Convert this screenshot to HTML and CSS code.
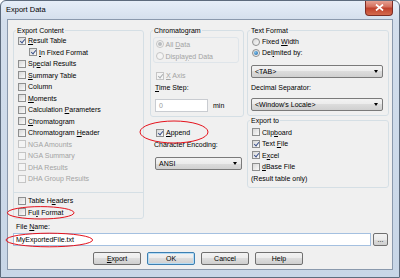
FILE: index.html
```html
<!DOCTYPE html>
<html lang="en">

<head>
    <meta charset="UTF-8">
    <meta name="viewport" content="width=device-width, initial-scale=1.0">
    <title>Export Data</title>
    <link rel="stylesheet" href="styles.css">
</head>

<body>
    <div class="window">
        <div class="titlebar">
            <span class="title">Export Data</span>
            <button class="close">
                <svg width="9" height="7" viewBox="0 0 9 7">
                    <path d="M1 0.5 L8 6.5 M8 0.5 L1 6.5" stroke="#fff" stroke-width="1.7" />
                </svg>
            </button>
        </div>

        <div class="client">
            <div class="panes">
                <!-- Export content -->
                <div class="col-left">
                    <fieldset class="group">
                        <legend>Export Content</legend>
                        <div class="content-body">
                            <div class="row"><span class="check on"></span><span><u>R</u>esult Table</span></div>
                            <div class="row indent"><span class="check on"></span><span><u>I</u>n Fixed Format</span></div>
                            <div class="row"><span class="check"></span><span>Sp<u>e</u>cial Results</span></div>
                            <div class="row"><span class="check"></span><span><u>S</u>ummary Table</span></div>
                            <div class="row"><span class="check"></span><span>Column</span></div>
                            <div class="row"><span class="check"></span><span><u>M</u>oments</span></div>
                            <div class="row"><span class="check"></span><span>Calculation <u>P</u>arameters</span></div>
                            <div class="row"><span class="check"></span><span><u>C</u>hromatogram</span></div>
                            <div class="row"><span class="check"></span><span>Chromatogram <u>H</u>eader</span></div>
                            <div class="row dis"><span class="check"></span><span>NGA Amounts</span></div>
                            <div class="row dis"><span class="check"></span><span>NGA Summary</span></div>
                            <div class="row dis"><span class="check"></span><span>DHA Results</span></div>
                            <div class="row dis"><span class="check"></span><span>DHA Group Results</span></div>
                            <div class="sep"></div>
                            <div class="row"><span class="check"></span><span>Table H<u>e</u>aders</span></div>
                            <div class="row"><span class="check"></span><span>Fu<u>l</u>l Format</span></div>
                        </div>
                    </fieldset>
                </div>

                <!-- Chromatogram -->
                <div class="col-mid">
                    <fieldset class="group">
                        <legend>Chromatogram</legend>
                        <div class="chrom-body">
                            <div class="radio-box">
                                <div class="row radio-row dis"><span class="radio on"></span><span>All <u>D</u>ata</span></div>
                                <div class="row radio-row dis"><span class="radio"></span><span>Displa<u>y</u>ed Data</span></div>
                            </div>
                            <div class="row xaxis dis"><span class="check on"></span><span><u>X</u> Axis</span></div>
                            <div class="row label-mid"><span><u>T</u>ime Step:</span></div>
                            <div class="step-row">
                                <div class="field field-step">0</div>
                                <span class="unit">min</span>
                            </div>
                        </div>
                    </fieldset>

                    <div class="row append"><span class="check on"></span><span><u>A</u>ppend</span></div>
                    <div class="row label-mid"><span>Character Encoding:</span></div>
                    <div class="combo combo-enc"><span>ANSI</span><span class="arrow"></span></div>
                </div>

                <!-- Text format and target -->
                <div class="col-right">
                    <fieldset class="group">
                        <legend>Text Format</legend>
                        <div class="format-body">
                            <div class="row radio-row2"><span class="radio"></span><span>Fixed <u>W</u>idth</span></div>
                            <div class="row radio-row2"><span class="radio on"></span><span>Del<u>i</u>mited by:</span></div>
                            <div class="combo combo-tab"><span>&lt;TAB&gt;</span><span class="arrow"></span></div>
                            <div class="label-dec">Decimal Separator:</div>
                            <div class="combo combo-dec"><span>&lt;Window's Locale&gt;</span><span class="arrow"></span></div>
                        </div>
                    </fieldset>

                    <fieldset class="group">
                        <legend>Export to</legend>
                        <div class="target-body">
                            <div class="row"><span class="check"></span><span>Clip<u>b</u>oard</span></div>
                            <div class="row"><span class="check on"></span><span>Text <u>F</u>ile</span></div>
                            <div class="row"><span class="check on"></span><span>E<u>x</u>cel</span></div>
                            <div class="row"><span class="check"></span><span><u>d</u>Base File</span></div>
                            <div class="row note"><span>(Result table only)</span></div>
                        </div>
                    </fieldset>
                </div>
            </div>

            <div class="file-label">File <u>N</u>ame:</div>
            <div class="file-row">
                <div class="field field-file">MyExportedFile.txt</div>
                <button class="btn btn-browse">...</button>
            </div>

            <div class="actions">
                <button class="btn"><u>E</u>xport</button>
                <button class="btn btn-default">OK</button>
                <button class="btn">Cancel</button>
                <button class="btn">Help</button>
            </div>
        </div>
    </div>

    <!-- red markup drawn over the dialog -->
    <svg class="marks" width="400" height="278" viewBox="0 0 400 278">
        <ellipse cx="40.7" cy="212.8" rx="33.3" ry="6.2" />
        <ellipse cx="49.3" cy="240" rx="43.3" ry="6.8" />
        <ellipse cx="174" cy="132" rx="34" ry="11" />
    </svg>
</body>

</html>
```

FILE: styles.css
```css
* {
    box-sizing: border-box;
}

body {
    margin: 0;
    font-family: 'Liberation Sans', Arial, sans-serif;
    font-size: 7px;
    color: #000;
    background-color: #fff;
}

u {
    text-decoration-thickness: 1px;
    text-underline-offset: 1px;
}

.window {
    width: 400px;
    height: 278px;
    border: 1px solid #5d6b7d;
    border-radius: 6px 6px 0 0;
    background: linear-gradient(#e6eef8, #d3deec 20px, #c8d6e7);
    display: flex;
    flex-direction: column;
    overflow: hidden;
}

.titlebar {
    height: 18px;
    display: flex;
    align-items: flex-start;
    padding-left: 5px;
}

.title {
    font-size: 7.5px;
    line-height: 18px;
}

.close {
    margin: -1px 6px 0 auto;
    width: 28px;
    height: 16px;
    padding: 0;
    border: 1px solid #7d2d24;
    border-top: none;
    border-radius: 0 0 4px 4px;
    background: linear-gradient(#e9a99b, #d46f5d 45%, #c0412c 55%, #d36a4d);
    display: flex;
    align-items: center;
    justify-content: center;
}

.client {
    flex: 1;
    margin: 0 6px 7px;
    border: 1px solid #8a99ad;
    background-color: #f0f0f0;
    padding: 6px 3px 0 5px;
    display: flex;
    flex-direction: column;
}

.panes {
    display: flex;
    align-items: flex-start;
}

.col-left {
    width: 131px;
}

.col-mid {
    width: 94px;
    margin-left: 6px;
}

.col-right {
    width: 142px;
    margin-left: 3px;
}

/* group boxes */
.group {
    margin: 0;
    padding: 0;
    min-width: 0;
    border: 1px solid #d5dfe5;
    border-radius: 3px;
}

.group legend {
    padding: 0 1px;
    margin-left: 2px;
    line-height: 9px;
    font-size: 7px;
}

.row {
    display: flex;
    align-items: center;
    height: 11.5px;
    white-space: nowrap;
}

.dis {
    color: #a3a3a3;
}

.check {
    position: relative;
    flex: none;
    width: 8px;
    height: 8px;
    margin-right: 2px;
    border: 1px solid #8e8f8f;
    background: linear-gradient(135deg, #d8d8d8, #fafafa);
}

.check.on::after {
    content: "";
    position: absolute;
    left: 1.8px;
    top: -0.2px;
    width: 2px;
    height: 4.2px;
    border: solid #3c528c;
    border-width: 0 1.4px 1.4px 0;
    transform: rotate(40deg);
}

.dis .check {
    border-color: #c5c5c5;
    background: #f4f4f4;
}

.dis .check.on::after {
    border-color: #a9adb0;
}

.radio {
    position: relative;
    flex: none;
    width: 8px;
    height: 8px;
    margin-right: 1.5px;
    border: 1px solid #8e8f8f;
    border-radius: 50%;
    background: linear-gradient(135deg, #d8d8d8, #fafafa);
}

.radio.on::after {
    content: "";
    position: absolute;
    left: 1px;
    top: 1px;
    width: 4px;
    height: 4px;
    border-radius: 50%;
    background: radial-gradient(circle at 35% 35%, #7cc1ef, #1d5f9c);
}

.dis .radio {
    border-color: #c5c5c5;
    background: #f4f4f4;
}

.dis .radio.on::after {
    background: #b9bcbf;
}

/* export content */
.content-body {
    padding-left: 4px;
}

.row.indent {
    padding-left: 11px;
}

.sep {
    margin: 7.5px 0 2px -4px;
    border-top: 1px solid #d5dfe5;
}

/* chromatogram */
.chrom-body {
    padding-bottom: 4px;
}

.radio-box {
    width: 86px;
    margin: 2px 0 0 2px;
    padding-left: 2px;
    border: 1px solid #dfe5ea;
    border-radius: 3px;
}

.radio-row {
    height: 12px;
}

.xaxis {
    margin-top: 7px;
    padding-left: 5px;
}

.label-mid {
    padding-left: 4px;
}

.step-row {
    display: flex;
    align-items: center;
    margin: 6px 0 0 4px;
}

.field {
    height: 13px;
    line-height: 11px;
    padding-left: 3px;
    background-color: #fff;
    border: 1px solid #abadb3;
}

.field-step {
    width: 53px;
    color: #9a9a9a;
    border-color: #c9ccd1;
}

.unit {
    margin-left: 5px;
}

.append {
    margin-top: 10px;
    padding-left: 6px;
}

.label-mid + .combo {
    margin-top: 7px;
}

/* drop-down lists */
.combo {
    display: flex;
    align-items: center;
    justify-content: space-between;
    height: 13px;
    padding: 0 4px 0 3px;
    border: 1px solid #7a7a7a;
    border-radius: 2px;
    background: linear-gradient(#f3f3f3, #ebebeb 50%, #dcdcdc 50%, #d0d0d0);
}

.arrow {
    width: 0;
    height: 0;
    border-left: 2.5px solid transparent;
    border-right: 2.5px solid transparent;
    border-top: 3px solid #000;
}

.combo-enc {
    width: 87px;
    margin-left: 5px;
}

/* text format */
.format-body {
    padding: 1px 0 4px 4px;
}

.radio-row2 {
    height: 11px;
}

.radio-row2 .radio {
    margin-right: 2px;
}

.combo-tab {
    width: 132px;
    margin: 7px 0 0 -1px;
}

.label-dec {
    height: 11px;
    line-height: 11px;
    margin: 4px 0 0 -1px;
}

.combo-dec {
    width: 132px;
    margin: 5px 0 0 -1px;
}

.target-body {
    padding: 1.5px 0 3px 4px;
}

.note {
    margin-left: -1px;
}

/* file name and buttons */
.file-label {
    height: 10px;
    line-height: 10px;
    margin-top: 3px;
    padding-left: 3px;
}

.file-row {
    display: flex;
    margin-top: 1px;
}

.field-file {
    width: 358px;
    border-color: #a4c0e0;
    padding-left: 2px;
}

.btn {
    height: 13px;
    padding: 0;
    font-family: inherit;
    font-size: 7px;
    color: #000;
    border: 1px solid #707070;
    border-radius: 2px;
    background: linear-gradient(#f3f3f3, #ebebeb 50%, #dddddd 50%, #cfcfcf);
}

.btn-browse {
    width: 15px;
    margin-left: 2px;
    line-height: 8px;
}

.btn-default {
    border-color: #3c7fb1;
    box-shadow: inset 0 0 0 1px #b5dcf5;
}

.actions {
    display: flex;
    gap: 6px;
    margin-top: 6px;
    padding-left: 80px;
}

.actions .btn {
    width: 48px;
}

.marks {
    position: absolute;
    top: 0;
    left: 0;
    pointer-events: none;
}

.marks ellipse {
    fill: none;
    stroke: #e5121c;
    stroke-width: 1;
}
```
